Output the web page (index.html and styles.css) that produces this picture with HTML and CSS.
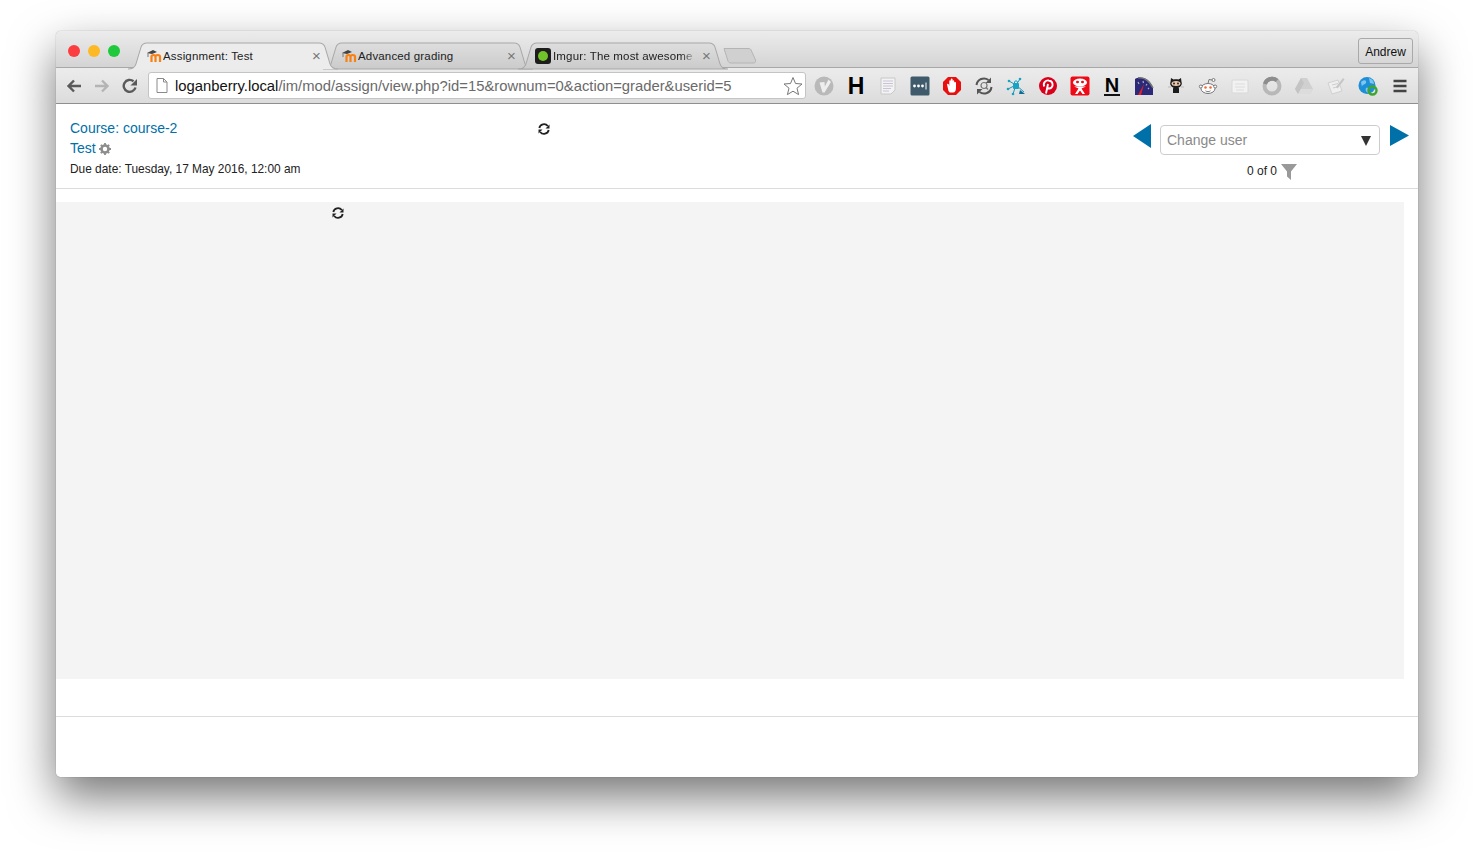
FILE: index.html
```html
<!DOCTYPE html>
<html lang="en">
<head>
    <meta charset="UTF-8">
    <title>Assignment: Test</title>
    <link rel="stylesheet" href="styles.css">
</head>
<body>
    <svg class="defs" width="0" height="0">
        <linearGradient id="tabFill" x1="0" y1="0" x2="0" y2="1">
            <stop offset="0" stop-color="#dedede"/>
            <stop offset="1" stop-color="#cbcbcb"/>
        </linearGradient>
        <symbol id="moodle" viewBox="0 0 16 14">
            <path d="M0 4 L6 1 L10 3 L5 5 Z" fill="#444"/>
            <path d="M1 4 V8" stroke="#777" fill="none"/>
            <path d="M4.500 13 V7.500 C4.500 5.500 8.500 5.500 8.500 7.500 V13 M8.500 7.500 C8.500 5.500 13 5.500 13 7.500 V13" stroke="#f98012" stroke-width="2.200" fill="none"/>
        </symbol>
        <symbol id="spinner" viewBox="0 0 14 14">
            <path d="M2.300 6 A4.800 4.800 0 0 1 10.800 4" stroke="#222" stroke-width="1.800" fill="none"/>
            <path d="M11.700 8 A4.800 4.800 0 0 1 3.200 10" stroke="#222" stroke-width="1.800" fill="none"/>
            <path d="M12.500 2.500 V6.500 H8.500 Z M1.500 11.500 V7.500 H5.500 Z" fill="#222"/>
        </symbol>
    </svg>

    <div class="window">
        <div class="titlebar">
            <div class="traffic">
                <span class="dot dot-red"></span>
                <span class="dot dot-yellow"></span>
                <span class="dot dot-green"></span>
            </div>
            <div class="tabs">
                <div class="tab tab-active">
                    <svg class="tab-shape" viewBox="0 0 210 25" preserveAspectRatio="none"><path d="M0 25 C5 25 7 23 8 20 L13 4 C14 1 16 0 19 0 H191 C194 0 196 1 197 4 L202 20 C203 23 205 25 210 25" fill="#ececec" stroke="#a8a8a8"/></svg>
                    <svg class="favicon"><use href="#moodle"/></svg>
                    <span class="tab-title">Assignment: Test</span>
                    <span class="tab-close">×</span>
                </div>
                <div class="tab">
                    <svg class="tab-shape" viewBox="0 0 210 25" preserveAspectRatio="none"><path d="M0 25 C5 25 7 23 8 20 L13 4 C14 1 16 0 19 0 H191 C194 0 196 1 197 4 L202 20 C203 23 205 25 210 25 Z" fill="url(#tabFill)" stroke="#a8a8a8"/></svg>
                    <svg class="favicon"><use href="#moodle"/></svg>
                    <span class="tab-title">Advanced grading</span>
                    <span class="tab-close">×</span>
                </div>
                <div class="tab tab-imgur">
                    <svg class="tab-shape" viewBox="0 0 210 25" preserveAspectRatio="none"><path d="M0 25 C5 25 7 23 8 20 L13 4 C14 1 16 0 19 0 H191 C194 0 196 1 197 4 L202 20 C203 23 205 25 210 25 Z" fill="url(#tabFill)" stroke="#a8a8a8"/></svg>
                    <span class="favicon imgur"><span class="imgur-dot"></span></span>
                    <span class="tab-title tab-title-fade">Imgur: The most awesome</span>
                    <span class="tab-close">×</span>
                </div>
                <svg class="new-tab" width="34" height="17" viewBox="0 0 34 17"><path d="M1 1.500 H25 C27 1.500 28 2 28.500 4 L32.500 13 C33 15 32 16 30 16 H8 C6 16 5.500 15 5 14 Z" fill="#d0d0d0" stroke="#b4b4b4"/></svg>
            </div>
            <button class="profile-btn">Andrew</button>
        </div>

        <div class="toolbar">
            <svg class="nav-icon" viewBox="0 0 16 16"><path d="M15 8 H3 M8 2.500 L2.500 8 L8 13.500" stroke="#5a5a5a" stroke-width="2.400" fill="none"/></svg>
            <svg class="nav-icon" viewBox="0 0 16 16"><path d="M1 8 H13 M8 2.500 L13.500 8 L8 13.500" stroke="#b4b4b4" stroke-width="2.400" fill="none"/></svg>
            <svg class="nav-icon" viewBox="0 0 16 16"><path d="M13.500 9.500 A6 6 0 1 1 11.500 3.200" stroke="#5a5a5a" stroke-width="2.400" fill="none"/><path d="M15 1 V7.500 H8.500 Z" fill="#5a5a5a"/></svg>
            <div class="omnibox">
                <svg class="doc-icon" width="12" height="15" viewBox="0 0 12 15"><path d="M1 .500 H7.500 L11 4 V14.500 H1 Z M7.500 .500 V4 H11" fill="#fff" stroke="#8a8a8a"/></svg>
                <span class="url"><span class="url-host">loganberry.local</span>/im/mod/assign/view.php?id=15&amp;rownum=0&amp;action=grader&amp;userid=5</span>
                <svg class="star" width="20" height="20" viewBox="0 0 20 20"><path d="M10 1.500 L12.500 7.500 L19 8 L14 12.200 L15.600 18.600 L10 15.200 L4.400 18.600 L6 12.200 L1 8 L7.500 7.500 Z" fill="#fff" stroke="#777"/></svg>
            </div>
            <div class="extensions">
                <svg class="ext" viewBox="0 0 20 20"><circle cx="10" cy="10" r="9.500" fill="#b9b9b9"/><path d="M5.500 6.500 L10.500 6 L10.800 10.500 L14.500 3.500 L17 6 L10.500 16.500 L8.500 16.500 Z" fill="#eee"/></svg>
                <span class="ext ext-letter">H</span>
                <svg class="ext" viewBox="0 0 20 20"><path d="M3 2 H17 V14 L13 18 H3 Z" fill="#f3f3f3" stroke="#c8c8c8"/><path d="M5 5 H15 M5 7.500 H15 M5 10 H15 M5 12.500 H13 M5 15 H11" stroke="#c9c3d6"/></svg>
                <svg class="ext" viewBox="0 0 20 20"><rect width="19" height="19" x=".5" y=".5" rx="1.500" fill="#3e5a6b"/><circle cx="4.500" cy="10" r="1.400" fill="#fff"/><circle cx="8.500" cy="10" r="1.400" fill="#fff"/><circle cx="12.500" cy="10" r="1.400" fill="#fff"/><path d="M16 6.500 V13.500" stroke="#fff"/></svg>
                <svg class="ext" viewBox="0 0 20 20"><path d="M6 1 H14 L19 6 V14 L14 19 H6 L1 14 V6 Z" fill="#e8100f"/><path d="M6.500 15 L5 8.500 C5 7.500 6.500 7.500 6.800 8.500 L7.300 10 V5 C7.300 4 8.800 4 8.800 5 V3.300 C8.800 2.300 10.600 2.300 10.600 3.300 V5 C10.600 4 12.200 4 12.200 5 V6.500 C12.200 5.800 14 5.800 14 6.800 V12 C14 14.500 13 16.500 11 16.500 H8.500 C7.500 16.500 7 15.800 6.500 15 Z" fill="#fff"/></svg>
                <svg class="ext" viewBox="0 0 20 20"><path d="M2.500 9 A7.500 7.500 0 0 1 14.500 4" stroke="#555" stroke-width="2" fill="none"/><path d="M17.500 11 A7.500 7.500 0 0 1 5.500 16" stroke="#555" stroke-width="2" fill="none"/><path d="M17 1.500 V7 H11.500 Z M3 18.500 V13 H8.500 Z" fill="#555"/><circle cx="10" cy="9.500" r="3" fill="none" stroke="#777" stroke-width="1.200"/><path d="M12 11.500 L14 13.500" stroke="#777" stroke-width="1.200"/></svg>
                <svg class="ext" viewBox="0 0 20 20"><path d="M10 9 L3 5 M10 9 L2 13 M10 9 L7 18 M10 9 L14 3 M10 9 L18 16" stroke="#1e93b0"/><rect x="7" y="7" width="6" height="6" rx="1" fill="#17a3c4"/><path d="M8.500 7.500 V6 C8.500 4.500 11.500 4.500 11.500 6 V7.500" stroke="#17a3c4" fill="none"/><path d="M14 14 L19 18 H13 Z" fill="#0a6f96"/><circle cx="3" cy="5" r="1.300" fill="#17a3c4"/><circle cx="2" cy="13" r="1.300" fill="#17a3c4"/><circle cx="7" cy="18" r="1.300" fill="#17a3c4"/><circle cx="14" cy="3" r="1.300" fill="#17a3c4"/></svg>
                <svg class="ext" viewBox="0 0 20 20"><circle cx="10" cy="10" r="9" fill="#d8001a"/><path d="M8 17.500 L10 8 M6.300 10.500 C4.500 6.500 8 4 10.800 4.500 C15 5 15.500 9.500 13.500 11.500 C12 13 9.800 12.800 9.200 11.500" stroke="#fff" stroke-width="1.900" fill="none"/></svg>
                <svg class="ext" viewBox="0 0 20 20"><rect x=".5" y=".5" width="19" height="19" rx="2" fill="#ee0a17"/><ellipse cx="10" cy="6.500" rx="7" ry="4" fill="#fff"/><ellipse cx="7.500" cy="6" rx="1.500" ry="1.200" fill="#ee0a17"/><ellipse cx="12.500" cy="6" rx="1.500" ry="1.200" fill="#ee0a17"/><path d="M4 10.500 L16 10.500 L11.500 12.500 L15 18 H12.500 L10 14.500 L7.500 18 H5 L8.500 12.500 Z" fill="#fff"/></svg>
                <span class="ext ext-letter ext-letter-n">N</span>
                <svg class="ext" viewBox="0 0 20 20"><path d="M1 19 V3 C6 0 15 1 19 12 V19 Z" fill="#2c2a78"/><path d="M4 1.800 C9 1 15 4 19 12" stroke="#777" stroke-width="1.500" fill="none"/><path d="M4 19 L10 8 L7 19 Z" fill="#e3202c"/><path d="M4 6 L5 8 M9 5 L9.500 7 M13 8 L12 9.500 M15 12 L14 13" stroke="#aab" stroke-width="1.200"/></svg>
                <svg class="ext" viewBox="0 0 20 20"><path d="M5 2 L7.500 3.500 C9 3.200 11 3.200 12.500 3.500 L15 2 L15.500 6 C16.500 8 15 11 12.500 11.500 C13 12 13 13 13 14 V17 H7 V14 C7 13 7 12 7.500 11.500 C5 11 3.500 8 4.500 6 Z" fill="#1b1b1b"/><ellipse cx="10" cy="7.500" rx="4.500" ry="2.500" fill="#e8c6ae"/><circle cx="8" cy="7.500" r=".9" fill="#1b1b1b"/><circle cx="12" cy="7.500" r=".9" fill="#1b1b1b"/><path d="M2 11 H5 M15 11 H18" stroke="#bbb"/></svg>
                <svg class="ext" viewBox="0 0 20 20"><ellipse cx="10" cy="12.500" rx="7" ry="5" fill="#fff" stroke="#777"/><circle cx="2.800" cy="10.500" r="1.500" fill="#fff" stroke="#777"/><circle cx="17.200" cy="10.500" r="1.500" fill="#fff" stroke="#777"/><circle cx="15.500" cy="4" r="1.500" fill="#fff" stroke="#777"/><path d="M10 7.500 L11 3.500 L14 4" stroke="#777" fill="none"/><circle cx="7.500" cy="11.500" r="1.300" fill="#f26a3a"/><circle cx="12.500" cy="11.500" r="1.300" fill="#f26a3a"/><path d="M7.500 14.800 C9 16 11 16 12.500 14.800" stroke="#777" fill="none"/></svg>
                <svg class="ext" viewBox="0 0 20 20"><rect x="2" y="4" width="16" height="13" rx="1" fill="#f2f2f2" stroke="#d8d8d8"/><path d="M5 8 H15 M5 11 H15 M6 14 H14" stroke="#dcdcdc"/></svg>
                <svg class="ext" viewBox="0 0 20 20"><circle cx="10" cy="10" r="7.500" fill="none" stroke="#b8b8b8" stroke-width="4"/><path d="M3 8 A7.500 7.500 0 0 1 15 4.500" stroke="#8d8d8d" stroke-width="4" fill="none"/></svg>
                <svg class="ext" viewBox="0 0 20 20"><path d="M7 2 H13 L19 13 L16 18 H4 L1 13 Z" fill="#d0d0d0"/><path d="M7 2 L1 13 L4 18 L10 7 Z" fill="#c4c4c4"/><path d="M4 18 H16 L19 13 H7 Z" fill="#dcdcdc"/></svg>
                <svg class="ext" viewBox="0 0 20 20"><path d="M2 7 L12 4 L16 15 L6 18 Z" fill="#efefef" stroke="#d0d0d0"/><path d="M6 9 L12 7.500 M6.800 12 L13 10.500" stroke="#ccc"/><path d="M10 11 L17 2 L18.500 3.500 L11.500 12.500 Z" fill="#c6c6c6"/></svg>
                <svg class="ext" viewBox="0 0 20 20"><circle cx="9" cy="9.500" r="8.500" fill="#1d8fd8"/><path d="M3 6 C6 3 9 4 8 7 C7 9 4 8 4 11 Z M11 2 C14 3 16 5 16 8 L12 7 Z M8 12 C11 11 12 14 10 17 C8 16 7 14 8 12 Z" fill="#7fc5ee"/><circle cx="14.500" cy="14.500" r="4" fill="none" stroke="#3ea52e" stroke-width="2.400"/></svg>
                <svg class="ext" viewBox="0 0 20 20"><path d="M3.500 5 H16.500 M3.500 10 H16.500 M3.500 15 H16.500" stroke="#444" stroke-width="2.600"/></svg>
            </div>
        </div>

        <div class="page">
            <div class="grader-header">
                <div class="assign-info">
                    <a class="info-link" href="#">Course: course-2</a>
                    <div class="info-test">
                        <a class="info-link" href="#">Test</a>
                        <svg class="gear" width="12" height="12" viewBox="0 0 12 12"><circle cx="6" cy="6" r="3.500" fill="none" stroke="#8d8d8d" stroke-width="2.600"/><path d="M6 0 V12 M0 6 H12 M1.800 1.800 L10.200 10.200 M10.200 1.800 L1.800 10.200" stroke="#8d8d8d" stroke-width="1.800" stroke-dasharray="2 8 2"/></svg>
                    </div>
                    <div class="due-date">Due date: Tuesday, 17 May 2016, 12:00 am</div>
                </div>
                <svg class="spinner spinner-top"><use href="#spinner"/></svg>
                <div class="user-nav">
                    <div class="user-row">
                        <svg class="arrow arrow-prev" width="18" height="24" viewBox="0 0 18 24"><path d="M18 0 V24 L0 12 Z" fill="#0070a8"/></svg>
                        <div class="user-select">
                            <span>Change user</span>
                            <span class="select-caret"></span>
                        </div>
                        <svg class="arrow arrow-next" width="19" height="21" viewBox="0 0 19 21"><path d="M0 0 V21 L19 10.500 Z" fill="#0070a8"/></svg>
                    </div>
                    <div class="user-count">
                        <span class="count-text">0 of 0</span>
                        <svg width="16" height="16" viewBox="0 0 16 16"><path d="M0 0 H16 L10 7.500 V16 L6 12.500 V7.500 Z" fill="#999"/></svg>
                    </div>
                </div>
            </div>
            <div class="grade-panel">
                <svg class="spinner"><use href="#spinner"/></svg>
            </div>
            <div class="page-footer"></div>
        </div>
    </div>
</body>
</html>
```

FILE: styles.css
```css
* {
    margin: 0;
    padding: 0;
    box-sizing: border-box;
}

body {
    background: #fff;
    height: 857px;
    padding: 31px 56px 80px;
    overflow: hidden;
    font-family: 'Liberation Sans', Arial, sans-serif;
    color: #222;
}

.defs {
    position: absolute;
}

.window {
    height: 746px;
    display: flex;
    flex-direction: column;
    border-radius: 5px;
    overflow: hidden;
    background: #fff;
    box-shadow: 0 20px 46px rgba(0, 0, 0, 0.54), 0 0 1px rgba(0, 0, 0, 0.5);
}

.titlebar {
    height: 37px;
    display: flex;
    background: linear-gradient(#ececec, #d4d4d4);
    border-bottom: 1px solid #a8a8a8;
    position: relative;
}

.traffic {
    display: flex;
    gap: 8px;
    padding: 14px 0 0 12px;
    width: 72px;
}

.dot {
    width: 12px;
    height: 12px;
    border-radius: 50%;
}

.dot-red { background: #fc3d3f; }
.dot-yellow { background: #fdb924; }
.dot-green { background: #1ec93b; }

.tabs {
    display: flex;
    align-items: flex-start;
    padding-top: 12px;
    flex: 1;
}

.tab {
    width: 195px;
    height: 25px;
    display: flex;
    align-items: center;
    padding: 0 0 0 19px;
    font-size: 11.500px;
    letter-spacing: 0.160px;
    position: relative;
}

.tab-active {
    z-index: 2;
}

.tab-shape {
    position: absolute;
    left: 0;
    top: 0;
    width: 210px;
    height: 26px;
    overflow: visible;
}

.favicon {
    position: relative;
    width: 16px;
    height: 14px;
    flex-shrink: 0;
}

.tab-imgur {
    padding-left: 17px;
}

.imgur {
    width: 16px;
    height: 16px;
    margin-right: 2px;
    background: #1d1d1d;
    border-radius: 3px;
    display: flex;
    align-items: center;
    justify-content: center;
}

.imgur-dot {
    width: 10px;
    height: 10px;
    border-radius: 50%;
    background: #72c22a;
}

.tab-title {
    position: relative;
    width: 146px;
    white-space: nowrap;
    overflow: hidden;
}

.tab-title-fade {
    -webkit-mask-image: linear-gradient(90deg, #000 88%, transparent);
    mask-image: linear-gradient(90deg, #000 88%, transparent);
    width: 145px;
}

.tab-close {
    position: relative;
    margin-left: auto;
    margin-right: 2px;
    color: #777;
    font-size: 15px;
}

.new-tab {
    margin-top: 4px;
    margin-left: 10px;
}

.profile-btn {
    position: absolute;
    right: 5px;
    top: 7px;
    width: 55px;
    height: 26px;
    padding-top: 1px;
    background: transparent;
    border: 1px solid #a9a9a9;
    border-radius: 3px;
    font-family: 'Liberation Sans', Arial, sans-serif;
    font-size: 12px;
    color: #111;
}

.toolbar {
    height: 36px;
    display: flex;
    align-items: center;
    padding-left: 10px;
    background: linear-gradient(#ececec, #dcdcdc);
    border-bottom: 1px solid #8f8f8f;
}

.nav-icon {
    width: 16px;
    height: 16px;
    margin-right: 12px;
}

.omnibox {
    width: 658px;
    height: 27px;
    margin-left: -2px;
    display: flex;
    align-items: center;
    padding-left: 7px;
    background: #fff;
    border: 1px solid #c4c4c4;
    border-radius: 3px;
}

.doc-icon {
    margin-right: 7px;
}

.url {
    font-size: 14.800px;
    color: #6a6a6a;
    white-space: nowrap;
}

.url-host {
    color: #111;
}

.star {
    margin-left: auto;
    margin-right: 2px;
}

.extensions {
    display: flex;
    gap: 12px;
    margin-left: 8px;
}

.ext {
    width: 20px;
    height: 20px;
    flex-shrink: 0;
}

.ext-letter {
    display: flex;
    align-items: center;
    justify-content: center;
    font-weight: bold;
    font-size: 23px;
    line-height: 20px;
    color: #000;
}

.ext-letter-n {
    font-size: 20px;
    line-height: 18px;
    height: 20px;
    border-bottom: 2px solid #111;
    padding-top: 1px;
    width: 16px;
    margin: 0 2px;
}

.page {
    flex: 1;
    display: flex;
    flex-direction: column;
    background: #fff;
}

.grader-header {
    height: 85px;
    display: flex;
    padding-left: 14px;
    border-bottom: 1px solid #dcdcdc;
}

.assign-info {
    width: 467px;
    padding-top: 15px;
}

.info-link {
    color: #0070a8;
    font-size: 14px;
    text-decoration: none;
}

.info-test {
    display: flex;
    align-items: center;
    gap: 3px;
    margin-top: 3px;
}

.gear {
    margin-top: 2px;
}

.due-date {
    font-size: 11.900px;
    margin-top: 6px;
}

.spinner {
    width: 14px;
    height: 14px;
    display: block;
}

.spinner-top {
    margin-top: 18px;
}

.user-nav {
    margin-left: auto;
    width: 285px;
    padding-top: 20px;
}

.user-row {
    display: flex;
    align-items: flex-start;
}

.user-select {
    width: 220px;
    height: 30px;
    margin: 1px 10px 0 9px;
    display: flex;
    align-items: center;
    justify-content: space-between;
    padding: 0 8px 0 6px;
    border: 1px solid #ccc;
    border-radius: 4px;
    font-size: 14px;
    color: #8a8a8a;
}

.arrow-next {
    margin-top: 1px;
}

.select-caret {
    width: 0;
    height: 0;
    margin-top: 2px;
    border-left: 5px solid transparent;
    border-right: 5px solid transparent;
    border-top: 10px solid #333;
}

.user-count {
    display: flex;
    align-items: center;
    gap: 4px;
    margin: 9px 0 0 114px;
    font-size: 12px;
}

.count-text {
    margin-bottom: 2px;
}

.grade-panel {
    height: 477px;
    margin: 13px 14px 0 0;
    padding: 4px 0 0 275px;
    background: #f4f4f4;
}

.page-footer {
    margin-top: 37px;
    border-top: 1px solid #dcdcdc;
}
```
